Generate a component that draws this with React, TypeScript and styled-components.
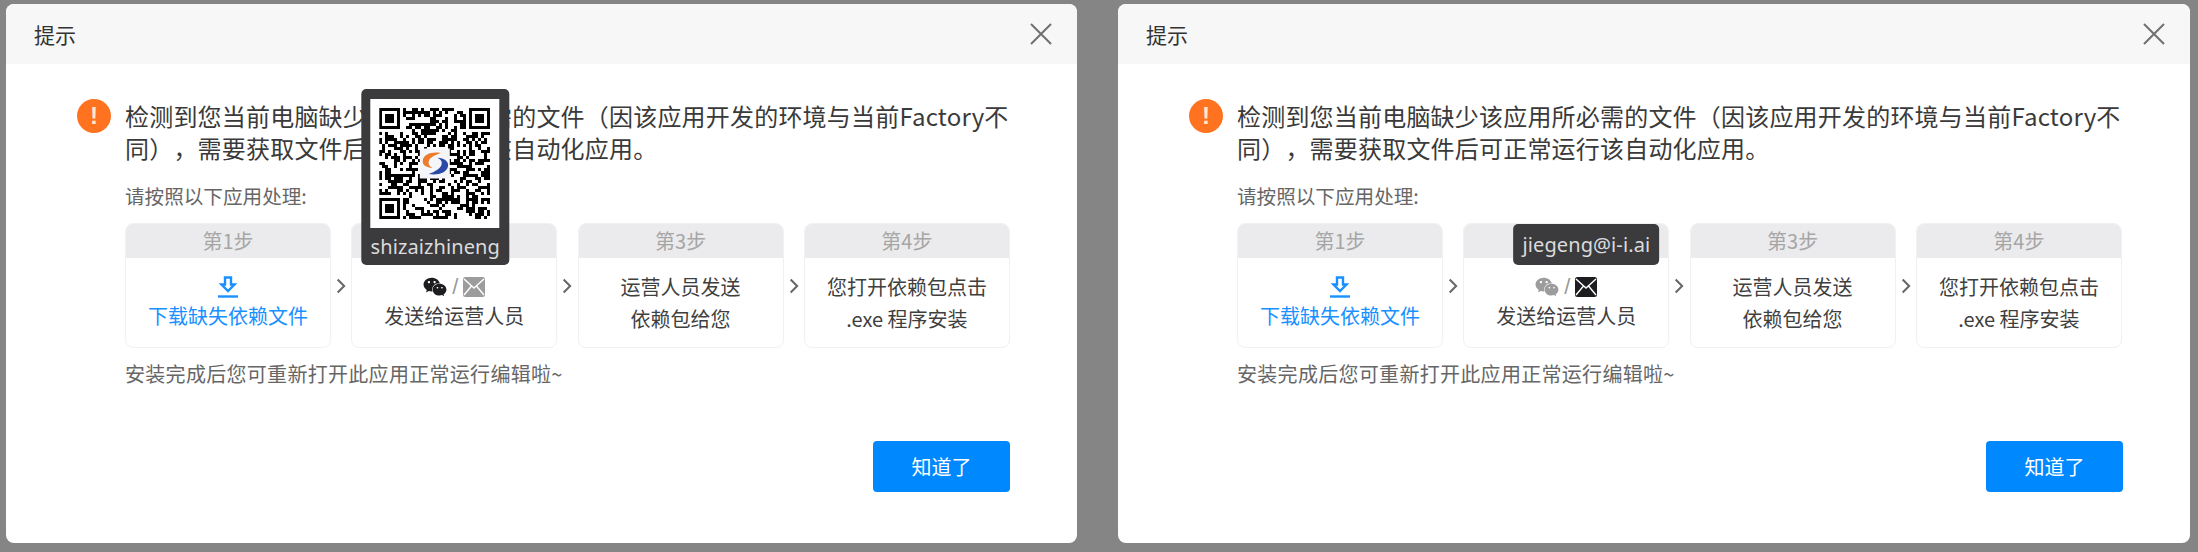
import { Fragment, ReactNode } from "react";
import styled, { createGlobalStyle } from "styled-components";
import { FaWeixin } from "react-icons/fa";

const GlobalStyle = createGlobalStyle`
  html, body {
    margin: 0;
    padding: 0;
    background: #858585;
  }
  body {
    font-family: "Noto Sans", "Noto Sans CJK SC", sans-serif;
  }
`;

const Page = styled.div`
  width: 2198px;
  height: 552px;
  box-sizing: border-box;
  padding: 4px 0 9px 6px;
  display: flex;
  gap: 41px;
  background: #858585;
  overflow: hidden;
`;

const Dialog = styled.div<{ $width: number }>`
  width: ${(p) => p.$width}px;
  height: 539px;
  background: #fff;
  border-radius: 8px;
  overflow: hidden;
  display: flex;
  flex-direction: column;
`;

const Header = styled.div`
  height: 60px;
  flex: none;
  box-sizing: border-box;
  padding: 0 25px 0 28px;
  background: #f7f7f8;
  display: flex;
  align-items: center;
  justify-content: space-between;
`;

const Title = styled.div`
  font-family: "Noto Sans CJK SC", sans-serif;
  font-size: 21px;
  color: #333;
`;

const CloseIcon = styled.svg`
  width: 22px;
  height: 22px;
  stroke: #707070;
  stroke-width: 2;
  fill: none;
`;

const Body = styled.div`
  flex: 1;
  padding: 36px 67px 0 71px;
  display: flex;
  flex-direction: column;
`;

const Message = styled.div`
  display: flex;
  gap: 14px;
  align-items: flex-start;
`;

const WarnBadge = styled.div`
  flex: none;
  width: 34px;
  height: 34px;
  margin-top: -1px;
  border-radius: 50%;
  background: #ff7320;
  color: #ffe9c8;
  font-family: "Liberation Sans", sans-serif;
  font-size: 24px;
  font-weight: 700;
  line-height: 34px;
  text-align: center;
`;

const MessageText = styled.div`
  font-family: "Noto Sans CJK SC", sans-serif;
  font-size: 24px;
  line-height: 32px;
  letter-spacing: 0.2px;
  text-spacing-trim: space-all;
  color: #3a3a3a;
`;

const Content = styled.div`
  margin-left: 48px;
`;

const Hint = styled.div`
  font-family: "Noto Sans CJK SC", sans-serif;
  font-size: 19.6px;
  line-height: 28px;
  color: #666;
  margin-top: 18px;
`;

const Steps = styled.div`
  display: flex;
  align-items: center;
  margin-top: 13px;
`;

const Chevron = styled.svg`
  flex: none;
  width: 20.3px;
  height: 16px;
  stroke: #666;
  stroke-width: 2;
  fill: none;
`;

const Card = styled.div`
  flex: none;
  width: 206px;
  height: 125px;
  box-sizing: border-box;
  border: 1px solid #f0f1f3;
  border-radius: 8px;
  display: flex;
  flex-direction: column;
  background: #fff;
`;

const CardHead = styled.div`
  height: 34px;
  flex: none;
  background: #ebebed;
  border-radius: 7px 7px 0 0;
  text-align: center;
  font-family: "Noto Sans CJK SC", sans-serif;
  font-size: 20px;
  line-height: 34px;
  color: #a6a6a6;
`;

const CardBody = styled.div<{ $accent?: boolean }>`
  flex: 1;
  display: flex;
  flex-direction: column;
  align-items: center;
  justify-content: center;
  font-family: "Noto Sans CJK SC", sans-serif;
  font-size: 20px;
  line-height: 32px;
  color: ${(p) => (p.$accent ? "#1890ff" : "#3f3f3f")};
`;

const IconRow = styled.div`
  display: flex;
  align-items: center;
  justify-content: center;
  gap: 5px;
  height: 26px;
  color: #999;
  font-size: 22px;
`;

const Slash = styled.span`
  font-family: "Liberation Sans", sans-serif;
  font-size: 22px;
  font-weight: 300;
  color: #999;
`;

const Anchor = styled.span<{ $on?: boolean }>`
  position: relative;
  display: inline-flex;
  align-items: center;
  height: 24px;
  color: ${(p) => (p.$on ? "#1d1d1f" : "#9c9c9c")};
`;

const Tooltip = styled.div`
  position: absolute;
  left: 50%;
  bottom: calc(100% + 10px);
  transform: translateX(-50%);
  display: flex;
  flex-direction: column;
  align-items: center;
  padding: 0 9px;
  background: #3b3b3e;
  border-radius: 5px;
  z-index: 2;
  white-space: nowrap;
`;

const TooltipText = styled.div<{ $line: number }>`
  font-family: "Noto Sans", sans-serif;
  font-size: 20px;
  line-height: ${(p) => p.$line}px;
  letter-spacing: 0.1px;
  color: #dcdcdc;
`;

const QrBox = styled.div`
  width: 129px;
  height: 129px;
  margin-top: 10px;
  background: #fff;
  display: flex;
  align-items: center;
  justify-content: center;
`;

const Footnote = styled(Hint)`
  margin-top: 12px;
  font-size: 20px;
  letter-spacing: 0.3px;
`;

const Actions = styled.div`
  display: flex;
  justify-content: flex-end;
  margin-top: 53px;
`;

const PrimaryButton = styled.button`
  width: 137px;
  height: 51px;
  border: none;
  border-radius: 4px;
  background: #0088ff;
  color: #fff;
  font-family: "Noto Sans CJK SC", sans-serif;
  font-size: 20px;
`;

const QR_SIZE = 37;

const inFinder = (x: number, y: number) =>
  (x < 8 && y < 8) || (x >= QR_SIZE - 8 && y < 8) || (x < 8 && y >= QR_SIZE - 8);

// not a real code, just looks like one
const qrCells = () => {
  const cells: [number, number][] = [];
  let seed = 48271;
  for (let y = 0; y < QR_SIZE; y++) {
    for (let x = 0; x < QR_SIZE; x++) {
      seed = (seed * 16807) % 2147483647;
      if (inFinder(x, y)) continue;
      if (seed % 100 < 52) cells.push([x, y]);
    }
  }
  return cells;
};

const Finder = ({ x, y }: { x: number; y: number }) => (
  <g>
    <rect x={x + 0.5} y={y + 0.5} width={6} height={6} fill="none" stroke="#000" />
    <rect x={x + 2} y={y + 2} width={3} height={3} fill="#000" />
  </g>
);

const QrCode = () => (
  <svg width={111} height={111} viewBox="0 0 37 37" shapeRendering="crispEdges">
    {qrCells().map(([x, y]) => (
      <rect key={`${x}-${y}`} x={x} y={y} width={1} height={1} fill="#000" />
    ))}
    <Finder x={0} y={0} />
    <Finder x={30} y={0} />
    <Finder x={0} y={30} />
    <g shapeRendering="auto">
      <rect x={13.5} y={13.5} width={10} height={10} fill="#f4f6fa" />
      <path d="M20.5 15c-3-.5-5.6.4-6 2.4-.3 1.6 1.2 2.4 3.2 2.6-1.1-.6-1.5-1.4-1.2-2.3.4-1.2 2-2 4-2.7z" fill="#ee7a2b" />
      <path d="M16.5 22c3 .5 6-.4 6.4-2.6.3-1.7-1.3-2.6-3.5-2.8 1.2.6 1.7 1.5 1.3 2.4-.5 1.3-2.1 2.2-4.2 3z" fill="#2b4aa8" />
    </g>
  </svg>
);

const MailIcon = () => (
  <svg width={22} height={20} viewBox="0 0 22 20">
    <rect width={22} height={20} rx={2.5} fill="currentColor" />
    <path d="M1 2l10 9 10-9M1 18l7.5-9M21 18l-7.5-9" fill="none" stroke="#fff" strokeWidth={1.4} />
  </svg>
);

const DownloadIcon = () => (
  <svg width={22} height={22} viewBox="0 0 22 22" fill="none" stroke="#1890ff" strokeWidth={2.4}>
    <path d="M8 1.5h6v7h3.5L11 15 4.5 8.5H8z" />
    <path d="M1 20.5h20" />
  </svg>
);

const steps: { label: string; lines?: string[]; kind?: "download" | "send" }[] = [
  { label: "第1步", kind: "download" },
  { label: "第2步", kind: "send" },
  { label: "第3步", lines: ["运营人员发送", "依赖包给您"] },
  { label: "第4步", lines: ["您打开依赖包点击", ".exe 程序安装"] },
];

type Contact = "wechat" | "mail";

const SendIcons = ({ active }: { active: Contact }) => (
  <IconRow>
    <Anchor $on={active === "wechat"}>
      <FaWeixin size={24} />
      {active === "wechat" && (
        <Tooltip>
          <QrBox>
            <QrCode />
          </QrBox>
          <TooltipText $line={37}>shizaizhineng</TooltipText>
        </Tooltip>
      )}
    </Anchor>
    <Slash>/</Slash>
    <Anchor $on={active === "mail"}>
      <MailIcon />
      {active === "mail" && (
        <Tooltip>
          <TooltipText $line={41}>jiegeng@i-i.ai</TooltipText>
        </Tooltip>
      )}
    </Anchor>
  </IconRow>
);

const StepCard = ({ label, children, accent }: { label: string; children: ReactNode; accent?: boolean }) => (
  <Card>
    <CardHead>{label}</CardHead>
    <CardBody $accent={accent}>{children}</CardBody>
  </Card>
);

const NoticeDialog = ({ width, active }: { width: number; active: Contact }) => (
  <Dialog $width={width}>
    <Header>
      <Title>提示</Title>
      <CloseIcon viewBox="0 0 22 22">
        <path d="M1 1l20 20M21 1L1 21" />
      </CloseIcon>
    </Header>
    <Body>
      <Message>
        <WarnBadge>!</WarnBadge>
        <MessageText>
          检测到您当前电脑缺少该应用所必需的文件（因该应用开发的环境与当前Factory不同），需要获取文件后可正常运行该自动化应用。
        </MessageText>
      </Message>
      <Content>
        <Hint>请按照以下应用处理:</Hint>
        <Steps>
          {steps.map((step, i) => (
            <Fragment key={step.label}>
              {i > 0 && (
                <Chevron viewBox="0 0 20 16">
                  <path d="M6.5 1.5l6.5 6.5-6.5 6.5" />
                </Chevron>
              )}
              <StepCard label={step.label} accent={step.kind === "download"}>
                {step.kind === "download" && (
                  <>
                    <IconRow>
                      <DownloadIcon />
                    </IconRow>
                    <div>下载缺失依赖文件</div>
                  </>
                )}
                {step.kind === "send" && (
                  <>
                    <SendIcons active={active} />
                    <div>发送给运营人员</div>
                  </>
                )}
                {step.lines?.map((line) => <div key={line}>{line}</div>)}
              </StepCard>
            </Fragment>
          ))}
        </Steps>
        <Footnote>安装完成后您可重新打开此应用正常运行编辑啦~</Footnote>
      </Content>
      <Actions>
        <PrimaryButton>知道了</PrimaryButton>
      </Actions>
    </Body>
  </Dialog>
);

export default function App() {
  return (
    <>
      <GlobalStyle />
      <Page>
        <NoticeDialog width={1071} active="wechat" />
        <NoticeDialog width={1072} active="mail" />
      </Page>
    </>
  );
}
